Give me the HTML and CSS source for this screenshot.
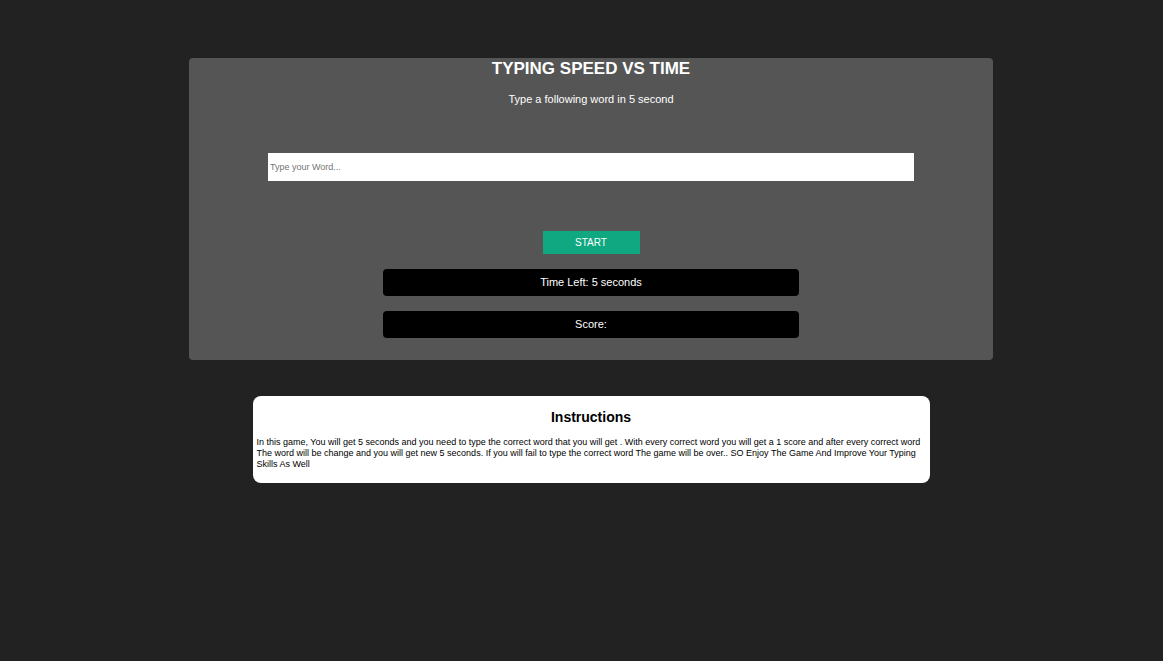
FILE: index.html
```
<!DOCTYPE html>
<html lang="en">
<head>
<meta charset="utf-8">
<title>Typing Speed vs Time</title>
<link rel="stylesheet" href="styles.css">
</head>
<body>
<main class="page">
  <section class="game">
    <h1 class="title">TYPING SPEED VS TIME</h1>
    <p class="lead">Type a following word in 5 second</p>
    <input class="word" type="text" placeholder="Type your Word..." aria-label="Type your word">
    <button class="start" type="button">START</button>
    <div class="status">Time Left: 5 seconds</div>
    <div class="status">Score:</div>
  </section>
  <section class="instructions">
    <h2 class="subtitle">Instructions</h2>
    <p class="text">In this game, You will get 5 seconds and you need to type the correct word that you will get . With every correct word you will get a 1 score and after every correct word The word will be change and you will get new 5 seconds. If you will fail to type the correct word The game will be over.. SO Enjoy The Game And Improve Your Typing Skills As Well</p>
  </section>
</main>
</body>
</html>
```
FILE: styles.css
```
* {
  box-sizing: border-box;
}

body {
  margin: 0;
  background: #222;
  color: #fff;
  font-family: "Liberation Sans", Arial, sans-serif;
}

.page {
  display: flex;
  flex-direction: column;
  align-items: center;
  padding: 58px 0 40px 19px;
}

.game {
  display: flex;
  flex-direction: column;
  align-items: center;
  width: 804px;
  max-width: 100%;
  padding-bottom: 22px;
  background: #555;
  border-radius: 4px;
}

.title {
  margin: 0;
  font-size: 17px;
  line-height: 22px;
}

.lead {
  margin: 12px 0 0;
  font-size: 11px;
  line-height: 14px;
}

.word {
  width: 646px;
  max-width: 100%;
  height: 28px;
  margin: 47px 0 50px;
  padding: 0 2px;
  border: 0;
  background: #fff;
  font-family: inherit;
  font-size: 9px;
}

.word::placeholder {
  color: #757575;
}

.start {
  width: 97px;
  height: 23px;
  padding: 0;
  border: 0;
  background: #10a881;
  color: #fff;
  font-family: inherit;
  font-size: 10px;
}

.status {
  width: 416px;
  max-width: 100%;
  margin-top: 15px;
  padding: 7px;
  border-radius: 4px;
  background: #000;
  font-size: 11px;
  line-height: 13px;
  text-align: center;
}

.instructions {
  width: 677px;
  max-width: 100%;
  margin-top: 36px;
  padding: 12px 4px 13px;
  border-radius: 8px;
  background: #fff;
  color: #000;
}

.subtitle {
  margin: 0;
  font-size: 14px;
  line-height: 18px;
  text-align: center;
}

.text {
  margin: 11px 0 0;
  font-size: 9px;
  line-height: 11px;
}
```
